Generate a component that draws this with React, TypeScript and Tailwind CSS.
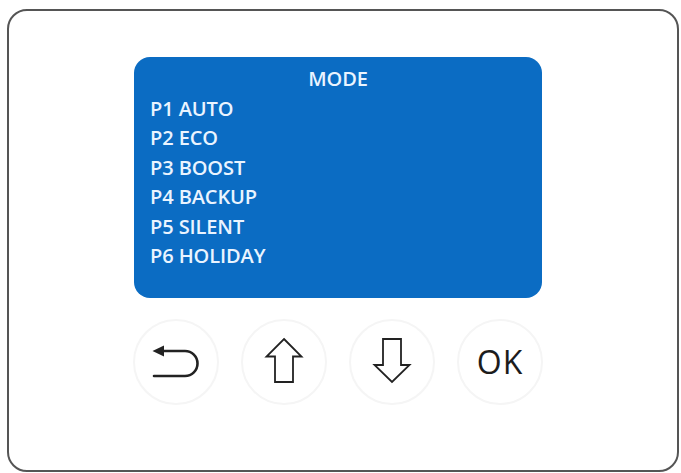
import React from "react";

const font = { fontFamily: '"Open Sans", "Noto Sans", sans-serif' };

export default function App() {
  const items = ["P1 AUTO", "P2 ECO", "P3 BOOST", "P4 BACKUP", "P5 SILENT", "P6 HOLIDAY"];
  return (
    <div className="w-[681px] h-[473px] bg-white pl-[7px] pt-[9px]" style={font}>
      <div className="w-[672px] h-[463px] border-2 border-[#555555] rounded-[20px] flex flex-col">
        <div className="ml-[125px] mt-[46px] w-[408px] h-[241px] rounded-[16px] bg-[#0b6cc3] pt-[7px] pl-[16px] text-[20px] font-semibold leading-[29.5px] text-[#eaf4ff] tracking-[-0.1px]">
          <div className="text-center pr-[16px]">MODE</div>
          {items.map((t) => (
            <div key={t}>{t}</div>
          ))}
        </div>
        <div className="ml-[124px] mt-[21px] flex gap-[22px]">
          <div className="w-[86px] h-[86px] rounded-full border-2 border-[#f5f5f5]">
            <svg width="82" height="82" viewBox="2 2 82 82" className="block">
              <path d="M28 32 H52 A12.5 12.5 0 0 1 52 57 H21" fill="none" stroke="#222" strokeWidth="2.6" strokeLinecap="round" />
              <path d="M19.5 32 L31 26.5 L31 37.5 Z" fill="#222" />
            </svg>
          </div>
          <div className="w-[86px] h-[86px] rounded-full border-2 border-[#f5f5f5]">
            <svg width="82" height="82" viewBox="2 2 82 82" className="block">
              <path d="M43 20 L60.5 37.5 L52 37.5 L52 63 L34 63 L34 37.5 L25.5 37.5 Z" fill="none" stroke="#222" strokeWidth="1.8" strokeLinejoin="miter" />
            </svg>
          </div>
          <div className="w-[86px] h-[86px] rounded-full border-2 border-[#f5f5f5]">
            <svg width="82" height="82" viewBox="2 2 82 82" className="block">
              <path d="M34 20 L52 20 L52 46 L60.5 46 L43 63 L25.5 46 L34 46 Z" fill="none" stroke="#222" strokeWidth="1.8" strokeLinejoin="miter" />
            </svg>
          </div>
          <div className="w-[86px] h-[86px] rounded-full border-2 border-[#f5f5f5] flex items-center justify-center text-[32px] font-medium text-[#1c1c1c] tracking-[1px]">
            OK
          </div>
        </div>
      </div>
    </div>
  );
}
